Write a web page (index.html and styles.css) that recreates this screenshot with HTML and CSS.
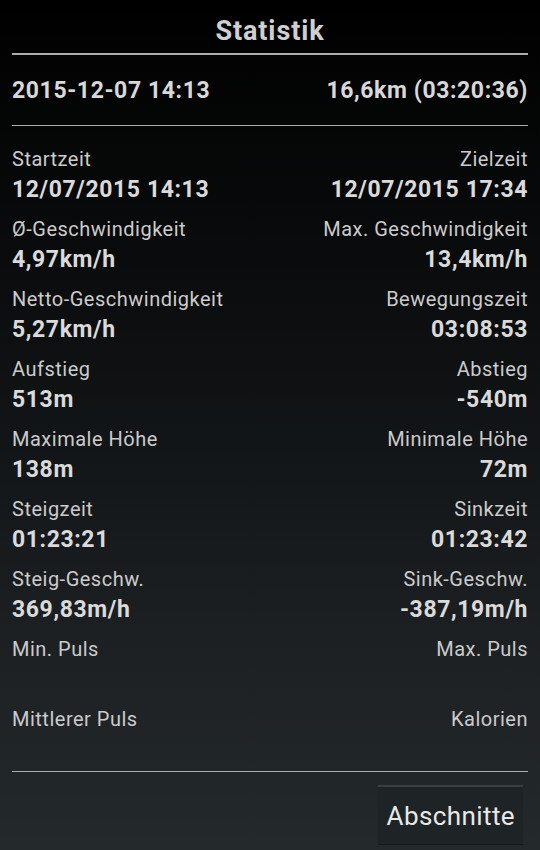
FILE: index.html
```html
<!DOCTYPE html>
<html>
<head>
  <title>Statistik</title>
<link rel="stylesheet" href="styles.css">
</head>
<body>
<div class="dialog">
  <div class="title">Statistik</div>
  <hr class="rule rule-thick">
  <div class="summary">
    <span>2015-12-07 14:13</span>
    <span>16,6km (03:20:36)</span>
  </div>
  <hr class="rule">

  <div class="stats">
    <div class="stat">
      <div class="label">Startzeit</div>
      <div class="value">12/07/2015 14:13</div>
    </div>
    <div class="stat right">
      <div class="label">Zielzeit</div>
      <div class="value">12/07/2015 17:34</div>
    </div>

    <div class="stat">
      <div class="label">Ø-Geschwindigkeit</div>
      <div class="value">4,97km/h</div>
    </div>
    <div class="stat right">
      <div class="label">Max. Geschwindigkeit</div>
      <div class="value">13,4km/h</div>
    </div>

    <div class="stat">
      <div class="label">Netto-Geschwindigkeit</div>
      <div class="value">5,27km/h</div>
    </div>
    <div class="stat right">
      <div class="label">Bewegungszeit</div>
      <div class="value">03:08:53</div>
    </div>

    <div class="stat">
      <div class="label">Aufstieg</div>
      <div class="value">513m</div>
    </div>
    <div class="stat right">
      <div class="label">Abstieg</div>
      <div class="value">-540m</div>
    </div>

    <div class="stat">
      <div class="label">Maximale Höhe</div>
      <div class="value">138m</div>
    </div>
    <div class="stat right">
      <div class="label">Minimale Höhe</div>
      <div class="value">72m</div>
    </div>

    <div class="stat">
      <div class="label">Steigzeit</div>
      <div class="value">01:23:21</div>
    </div>
    <div class="stat right">
      <div class="label">Sinkzeit</div>
      <div class="value">01:23:42</div>
    </div>

    <div class="stat">
      <div class="label">Steig-Geschw.</div>
      <div class="value">369,83m/h</div>
    </div>
    <div class="stat right">
      <div class="label">Sink-Geschw.</div>
      <div class="value">-387,19m/h</div>
    </div>

    <div class="stat">
      <div class="label">Min. Puls</div>
      <div class="value"></div>
    </div>
    <div class="stat right">
      <div class="label">Max. Puls</div>
      <div class="value"></div>
    </div>

    <div class="stat">
      <div class="label">Mittlerer Puls</div>
      <div class="value"></div>
    </div>
    <div class="stat right">
      <div class="label">Kalorien</div>
      <div class="value"></div>
    </div>
  </div>

  <hr class="rule">
  <div class="actions">
    <button class="button">Abschnitte</button>
  </div>
</div>
</body>
</html>
```

FILE: styles.css
```css
html, body {
  margin: 0;
  height: 100%;
}

body {
  font-family: Roboto, "Liberation Sans", sans-serif;
  color: #d4d4d4;
  background: linear-gradient(#000000 0%, #0b0d0e 35%, #1c2023 75%, #24292c 100%);
}

.dialog {
  padding: 0 12px;
}

.title {
  text-align: center;
  font-size: 27px;
  font-weight: bold;
  letter-spacing: 0.9px;
  color: #cfcfcf;
  height: 53px;
  line-height: 62px;
}

.rule {
  margin: 0;
  border: none;
  border-top: 1px solid #a9adaf;
}

.rule-thick {
  border-top-width: 2px;
}

.summary {
  display: flex;
  justify-content: space-between;
  font-size: 23px;
  font-weight: bold;
  letter-spacing: 0.6px;
  color: #d8d8d8;
  height: 70px;
  line-height: 72px;
}

.stats {
  display: grid;
  grid-template-columns: 1fr 1fr;
  padding-top: 15px;
}

.stat {
  height: 70px;
}

.right {
  text-align: right;
}

.label {
  font-size: 20px;
  letter-spacing: 0.5px;
  line-height: 36px;
  color: #cbcbcb;
}

.value {
  font-size: 23px;
  font-weight: bold;
  letter-spacing: 0.6px;
  line-height: 26px;
  color: #dadada;
}

.actions {
  display: flex;
  justify-content: flex-end;
  padding-top: 13px;
}

.button {
  font-family: Roboto, "Liberation Sans", sans-serif;
  font-size: 26px;
  letter-spacing: 0.4px;
  color: #e8e8e8;
  background-color: #1e2326;
  border: none;
  border-top: 2px solid #383e42;
  border-bottom: 1px solid #15191b;
  height: 60px;
  padding: 0 8px 0 9px;
  margin-right: 5px;
}
```
